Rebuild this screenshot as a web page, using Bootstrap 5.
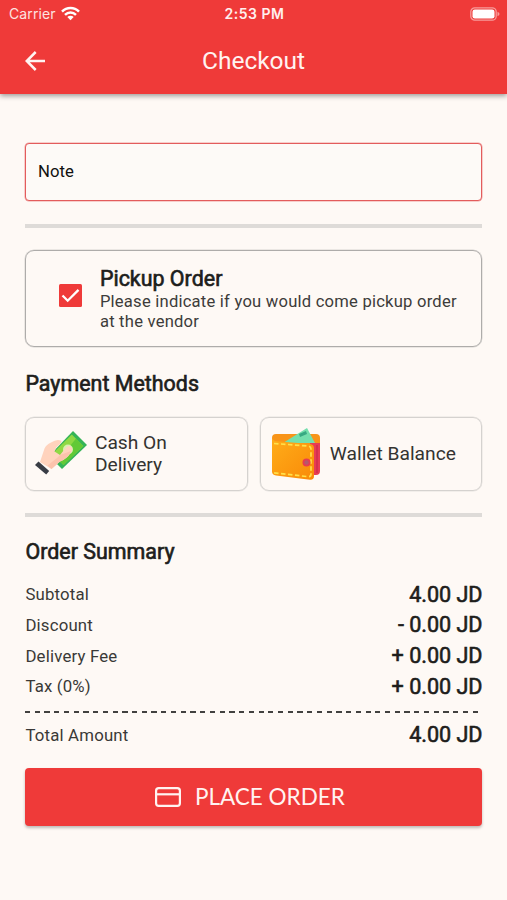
<!DOCTYPE html>
<html lang="en">
<head>
<meta charset="utf-8">
<meta name="viewport" content="width=device-width, initial-scale=1">
<title>Checkout</title>
<link href="https://cdn.jsdelivr.net/npm/bootstrap@5.3.0/dist/css/bootstrap.min.css" rel="stylesheet">
<style>
body{background:#fef9f5;font-family:Roboto,"Liberation Sans",sans-serif;color:#1e1e1c;min-height:900px}
svg{display:block;flex:none}
.app-top{background:#ef3a39;color:#fff;height:94px;box-shadow:0 2px 5px rgba(0,0,0,.38)}
.status{height:28px;font-size:14px;line-height:28px;padding:0 7px 0 9px;color:#fde3e0}
.status>*{flex:1 1 0}
.carrier{font-family:Inter,sans-serif;letter-spacing:.1px}
.wifi{margin:-2px 0 0 5.5px}
.clock{font-family:Inter,sans-serif;font-weight:600;font-size:14px;letter-spacing:.5px;color:#fff0ee}
.title-bar{height:66px;padding:0 25px}
.title-bar h1{font-size:24.5px;font-weight:400;line-height:66px;letter-spacing:-.05px;color:#fff3f1}
.side{width:20px}
.page{padding:48.5px 24.6px 0 25.4px}
.note{height:58.5px;border:1px solid #e35c5c;box-shadow:0 0 0 .5px #f0a3a1;border-radius:4px;background:#fdfaf7;padding:0 11.5px 1px;font-size:16.7px;letter-spacing:.1px;color:#111}
.rule{height:4px;margin-top:22.5px;background:#dedbd8}
.pickup{height:97px;margin-top:22px;border:1px solid #aeacaa;box-shadow:0 0 0 .5px #d8d5d2;border-radius:9px;padding:1px 10px 0 33px}
.tick{margin:-6px 17.5px 0 0}
.head{font-size:21.4px;font-weight:400;-webkit-text-stroke:.65px #1e1e1c;line-height:26px;letter-spacing:.02px}
.desc{font-size:16.6px;line-height:20px;color:#3d3c3a;letter-spacing:.22px}
.method{height:74px;border:1px solid #d5d2cf;box-shadow:0 0 0 .5px #e6e3e0;border-radius:9px;font-size:19.2px;line-height:22px;color:#343331}
.methods{gap:12px;margin-top:20px}
.line{height:30.7px;font-size:16.8px;letter-spacing:.18px;color:#3a3937}
.sum{font-size:21.6px;letter-spacing:-.04px;-webkit-text-stroke:.6px #1e1e1c;color:#1e1e1c}
.dash{height:2px;margin:8.5px 0 7.5px;background:repeating-linear-gradient(90deg,#42413f 0 5.2px,transparent 5.2px 9.73px)}
.place{height:58.5px;margin-top:17px;border-radius:4px;background:#ef3a39;color:#fff3f1;font-family:Lato,sans-serif;font-size:22.5px;box-shadow:0 2px 3px rgba(0,0,0,.25)}
.place:hover{background:#e33433;color:#fff}
</style>
</head>
<body>
<header class="app-top">
  <div class="status d-flex align-items-center">
    <div class="d-flex align-items-center"><span class="carrier">Carrier</span>
      <svg class="wifi" width="19" height="15" viewBox="0 0 19 15" fill="none" stroke="#fff" stroke-width="2.5"><path d="M1 5.6C5.8.7 13.2.7 18 5.6M4 8.8c3.2-3.1 7.8-3.1 11 0"/><path d="M9.5 14.2 6.3 11c1.9-1.8 4.5-1.8 6.4 0z" fill="#fff" stroke="none"/></svg>
    </div>
    <div class="clock text-center">2:53 PM</div>
    <div class="d-flex justify-content-end"><svg width="30" height="14" viewBox="0 0 30 14"><rect x=".8" y=".8" width="25.4" height="12.4" rx="4" fill="none" stroke="#f79c9b" stroke-width="1.3"/><rect x="2.5" y="2.4" width="22" height="9.2" rx="2.4" fill="#fff"/><path d="M27.5 4.7q2 .8 2 2.3t-2 2.3z" fill="#f79c9b"/></svg></div>
  </div>
  <div class="title-bar d-flex align-items-center justify-content-between">
    <svg class="side" width="20" height="20" viewBox="0 0 20 20" fill="none" stroke="#fff3f1" stroke-width="2.5"><path d="M20 10H2M10.7 1 1.7 10l9 9"/></svg>
    <h1 class="m-0">Checkout</h1>
    <span class="side"></span>
  </div>
</header>
<main class="page">
  <div class="note d-flex align-items-center">Note</div>
  <div class="rule"></div>
  <section class="pickup d-flex align-items-center">
    <svg class="tick" width="23" height="23" viewBox="0 0 23 23"><rect width="23" height="23" rx="1.5" fill="#ef3a39"/><path d="M3.5 11.5 8.7 16.7 19.5 5.9" fill="none" stroke="#fff" stroke-width="2.3"/></svg>
    <div><h2 class="head m-0">Pickup Order</h2><div class="desc text-nowrap">Please indicate if you would come pickup order<br>at the vendor</div></div>
  </section>
  <h2 class="head mb-0 mt-4">Payment Methods</h2>
  <div class="methods d-flex">
    <div class="method d-flex align-items-center flex-fill w-50 ps-2">
      <svg width="54" height="48" viewBox="0 0 54 48">
        <path d="M39 1 53 15 28 39 15 26z" fill="#35b457"/><path d="M37.8 4.5 49.3 16 29.5 35 18 24z" fill="#8fd944"/><path d="m42 8.5 7.3 7.5L29.5 35l-5-4.8z" fill="#62c936"/><circle cx="34" cy="19.5" r="5" fill="#d8f0b0"/>
        <path d="M6 32 10.5 18.5Q12 15 17 12.5 23 8.5 27.3 10.8 28.5 12.5 22.5 17.3L20.5 21.5 26 25 31.5 18Q34.5 14.5 37.6 17.2 39 19 37 22.5 33 29 26 31.5L17.5 39z" fill="#ffd3bd"/><path d="M26 25 37 21Q34 28.5 26 31.5L17.5 39l-4-3.4 9.5-7.5z" fill="#fbc3ad"/>
        <path d="m4.5 31.5 10.7 9.5-3 3.5L1 35z" fill="#393d45"/>
      </svg>
      <span style="margin-left:6.5px">Cash On<br>Delivery</span>
    </div>
    <div class="method d-flex align-items-center flex-fill w-50" style="padding-left:11px">
      <svg width="49" height="54" viewBox="0 0 49 54">
        <defs><linearGradient id="leather" x1="0" y1="0" x2="1" y2="1"><stop stop-color="#ffad19"/><stop offset="1" stop-color="#f98a08"/></linearGradient></defs>
        <rect x="0" y="7" width="48" height="26" rx="4" fill="#f89418"/><path d="M38 16h10v28q0 4-4 4h-6z" fill="#e83c55"/><path d="M45 18v28" stroke="#c92b4a" stroke-width="1.2"/>
        <path d="M11 16 35 1l8 15z" fill="#74dfac"/><path d="m27 7 7-3 1 3-7 3z" fill="#38a982"/>
        <path d="M0 11q1 3 5 3.3L38 17q4 .4 4 4v28q0 4-4 3.7L4 48.5q-4-.5-4-4z" fill="url(#leather)"/>
        <path d="M2 16.5 36 19q3 .3 3 3v25q0 3-3 2.7L2 45.8" fill="none" stroke="#ffe04a" stroke-width="1.7" stroke-dasharray="4.5 2.5"/>
        <circle cx="34.5" cy="35.5" r="4" fill="#e83c50"/><circle cx="34.5" cy="35.5" r="2.2" fill="#b5596a"/>
      </svg>
      <span class="text-nowrap" style="margin-left:9px">Wallet Balance</span>
    </div>
  </div>
  <div class="rule"></div>
  <h2 class="head" style="margin:22px 0 14.5px">Order Summary</h2>
  <div class="line d-flex justify-content-between align-items-center"><span>Subtotal</span><span class="sum">4.00 JD</span></div>
  <div class="line d-flex justify-content-between align-items-center"><span>Discount</span><span class="sum">- 0.00 JD</span></div>
  <div class="line d-flex justify-content-between align-items-center"><span>Delivery Fee</span><span class="sum">+ 0.00 JD</span></div>
  <div class="line d-flex justify-content-between align-items-center"><span>Tax (0%)</span><span class="sum">+ 0.00 JD</span></div>
  <div class="dash"></div>
  <div class="line d-flex justify-content-between align-items-center"><span>Total Amount</span><span class="sum">4.00 JD</span></div>
  <button type="button" class="place btn border-0 w-100 d-flex align-items-center justify-content-center py-0 ps-0 pe-2">
    <svg width="26" height="20" viewBox="0 0 26 20" fill="none" stroke="#fff3f1" stroke-width="2.2"><rect x="1.1" y="1.1" width="23.8" height="17.8" rx="2.6"/><path d="M1 7.3h24"/></svg>
    <span style="margin-left:14px">PLACE ORDER</span>
  </button>
</main>
<script src="https://cdn.jsdelivr.net/npm/bootstrap@5.3.0/dist/js/bootstrap.bundle.min.js"></script>
</body>
</html>
